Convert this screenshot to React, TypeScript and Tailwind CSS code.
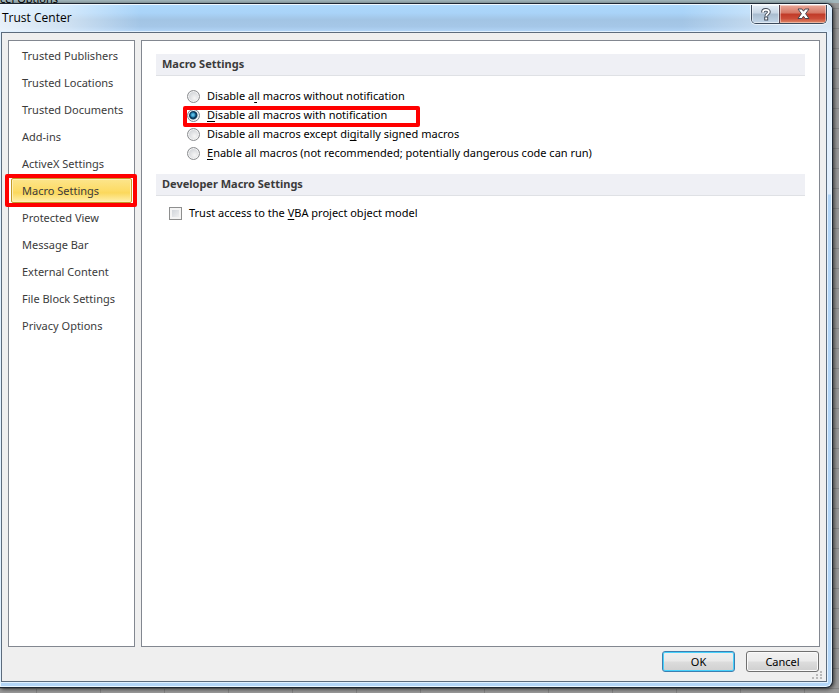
import { useState } from "react";
import type { ReactNode } from "react";

const sections = [
  "Trusted Publishers",
  "Trusted Locations",
  "Trusted Documents",
  "Add-ins",
  "ActiveX Settings",
  "Macro Settings",
  "Protected View",
  "Message Bar",
  "External Content",
  "File Block Settings",
  "Privacy Options",
];

const macroOptions: { id: string; label: ReactNode }[] = [
  { id: "none", label: <>Disable a<u>l</u>l macros without notification</> },
  { id: "notify", label: <><u>D</u>isable all macros with notification</> },
  { id: "signed", label: <>Disable all macros except di<u>g</u>itally signed macros</> },
  { id: "all", label: <><u>E</u>nable all macros (not recommended; potentially dangerous code can run)</> },
];

function Highlight({ className }: { className: string }) {
  return <span className={`pointer-events-none absolute z-10 rounded-xs border-4 border-[#ff0000] ${className}`} />;
}

function CaptionButtons() {
  return (
    <div className="mr-[5px] flex h-[19px] overflow-hidden rounded-b-[5px] border border-t-0 border-[#3c4a5c] shadow-[0_0_0_1px_rgba(255,255,255,0.6)]">
      <button
        type="button"
        aria-label="Help"
        className="flex w-[28px] items-center justify-center border-r border-[#59404a] bg-[linear-gradient(#e4edf6_0%,#c8d6e5_45%,#a9bccf_50%,#c3d6e8_100%)] inset-shadow-[0_0_0_1px_rgba(255,255,255,0.5)]"
      >
        <svg width="10" height="13" viewBox="0 0 10 13" fill="none">
          <path d="M2 4.4V4c0-1.3 1.2-2.2 2.9-2.2S7.900 2.700 7.900 4c0 1.900-2.600 1.900-2.600 4" stroke="#434b58" strokeWidth="3.6" />
          <path d="M3.2 8.6h4v4h-4z" fill="#434b58" />
          <path d="M2 4.4V4c0-1.3 1.2-2.2 2.9-2.2S7.900 2.700 7.900 4c0 1.900-2.600 1.900-2.600 4" stroke="#fff" strokeWidth="1.8" />
          <path d="M4.2 9.600h2v2h-2z" fill="#fff" />
        </svg>
      </button>
      <button
        type="button"
        aria-label="Close"
        className="flex w-[46px] items-center justify-center bg-[linear-gradient(#e9a999_0%,#d57664_45%,#c03a28_50%,#cb4c38_75%,#e08a68_100%)] inset-shadow-[0_0_0_1px_rgba(255,255,255,0.4)]"
      >
        <svg width="13" height="12" viewBox="0 0 13 12">
          <path
            d="M1 1h3.9l1.6 2.2L8.1 1H12L8.6 5.700 12 10.500H8.100L6.500 8.200l-1.600 2.300H1l3.400-4.800z"
            fill="#fff"
            stroke="#4b4750"
            strokeLinejoin="round"
          />
        </svg>
      </button>
    </div>
  );
}

function SectionHeading({ children }: { children: ReactNode }) {
  return (
    <h2 className="h-[22px] border-b border-[#dfe1e5] bg-[#eff0f5] px-[6px] text-[11px] leading-5 font-bold text-[#3b3b3b]">
      {children}
    </h2>
  );
}

export default function App() {
  const [section, setSection] = useState("Macro Settings");
  const [macro, setMacro] = useState("notify");
  const [trustVba, setTrustVba] = useState(false);

  return (
    <div className="relative flex min-h-screen flex-col overflow-hidden bg-[#9a9a9a] bg-[repeating-linear-gradient(90deg,transparent_0_36px,#848484_36px_37px,transparent_37px_64px),repeating-linear-gradient(transparent_0_8px,#848484_8px_9px,transparent_9px_20px)] font-['Noto_Sans','Open_Sans',sans-serif] text-[11px] text-black">
      <div className="flex h-[3px] items-end bg-[#a3b8bd]">
        <span className="leading-[9px]">cel Options</span>
      </div>

      <div className="relative mr-[6px] mb-[5px] flex flex-1 flex-col rounded-r-[7px] border border-l-0 border-[#1d2733] bg-[#b7d8f8] bg-[linear-gradient(#e3effc_0_190px,#b3d6f8_191px)] pr-[5px] pb-[5px] shadow-[1px_1px_4px_rgba(0,0,0,0.7)] inset-shadow-[0_0_0_1px_#e9f6ff]">
        <header className="-mr-[5px] flex h-[28px] items-start justify-between rounded-tr-[6px] border-t border-[#eff8ff] bg-[linear-gradient(90deg,rgba(255,255,255,0.75)_0,rgba(255,255,255,0.45)_70px,transparent_140px,transparent_82%,rgba(255,255,255,0.55)_96%),linear-gradient(#acd8fb_0%,#a9d3f8_30%,#a2c4e4_55%,#a5c7e8_80%,#b3d6f8_100%)]">
          <h1 className="pl-[2px] font-['Open_Sans','Noto_Sans',sans-serif] text-[12px] leading-[26px]">Trust Center</h1>
          <CaptionButtons />
        </header>

        <main className="ml-px flex flex-1 flex-col border border-[#5c6b7c] bg-[#efefef] px-[6px] pt-[7px] shadow-[0_0_0_1px_#e1f1ff]">
          <div className="flex flex-1 gap-[6px]">
            <nav className="w-[127px] shrink-0 border border-[#828790] bg-white px-[2px] pt-px">
              {sections.map((name) => (
                <div key={name} className="relative h-[27px] py-px">
                  <button
                    type="button"
                    onClick={() => setSection(name)}
                    className={`block h-[25px] w-full rounded-xs border px-[10px] text-left leading-[23px] whitespace-nowrap text-[#3b3b3b] ${
                      name === section
                        ? "border-[#c29b29] bg-[linear-gradient(#fce58c_0%,#fddc68_48%,#fbd85c_60%,#fff0ae_100%)] inset-shadow-[0_0_0_1px_#ffefb5]"
                        : "border-transparent"
                    }`}
                  >
                    {name}
                  </button>
                  {name === section && <Highlight className="-inset-y-[3px] -right-[5px] -left-[6px]" />}
                </div>
              ))}
            </nav>

            <section className="flex-1 border border-[#828790] bg-white px-[14px] pt-[13px]">
              <SectionHeading>Macro Settings</SectionHeading>
              <div role="radiogroup" aria-label="Macro Settings" className="flex flex-col items-start pt-[11px] pb-[11px] pl-[31px]">
                {macroOptions.map(({ id, label }) => (
                  <label key={id} className="relative flex h-[19px] items-center gap-[7px] whitespace-nowrap">
                    <input
                      type="radio"
                      name="macro"
                      checked={macro === id}
                      onChange={() => setMacro(id)}
                      className="size-[13px] appearance-none rounded-full border border-[#8b8d90] bg-[radial-gradient(circle_at_60%_65%,#f6f6f6_0%,#cfd2d6_75%)] inset-shadow-[0_0_0_1px_#f4f4f4] checked:border-[#7f8a94] checked:bg-[radial-gradient(circle_at_45%_45%,#7fd2f2_0,#2a8fc0_2px,#0d3c5e_3px,#0d3c5e_4px,#dbe3e9_5px)]"
                    />
                    <span className="[&_u]:underline-offset-2">{label}</span>
                    {id === "notify" && <Highlight className="top-0 -right-[33px] -bottom-[2px] -left-1" />}
                  </label>
                ))}
              </div>

              <SectionHeading>Developer Macro Settings</SectionHeading>
              <label className="flex items-center gap-[7px] pt-2 pl-[13px] leading-[18px]">
                <input
                  type="checkbox"
                  checked={trustVba}
                  onChange={(e) => setTrustVba(e.target.checked)}
                  className="size-[13px] appearance-none border border-[#8e8f8f] bg-[linear-gradient(135deg,#c9ced5,#f6f6f6)] inset-shadow-[0_0_0_2px_#f4f4f4] checked:bg-[#2a6f9e]"
                />
                <span className="[&_u]:underline-offset-2">
                  Trust access to the <u>V</u>BA project object model
                </span>
              </label>
            </section>
          </div>

          <footer className="relative flex h-[34px] items-start justify-end gap-[11px] pt-1 pr-px">
            <button
              type="button"
              className="h-[21px] w-[73px] rounded-[3px] border border-[#3c7fb1] bg-[linear-gradient(#f0f0f0_0%,#e9e9e9_48%,#dcdcdc_52%,#d0d0d0_100%)] leading-[19px] inset-shadow-[0_0_0_1px_#48d1fb]"
            >
              OK
            </button>
            <button
              type="button"
              className="h-[21px] w-[73px] rounded-[3px] border border-[#707070] bg-[linear-gradient(#f2f2f2_0%,#ebebeb_48%,#dddddd_52%,#cfcfcf_100%)] leading-[19px] inset-shadow-[0_0_0_1px_#fafafa]"
            >
              Cancel
            </button>
            <svg className="absolute -right-1 bottom-0" width="12" height="11" viewBox="0 0 12 11" fill="#b9b9b9">
              <path d="M8 1h2v2H8zM4 4h2v2H4zM8 4h2v2H8zM0 7h2v2H0zM4 7h2v2H4zM8 7h2v2H8z" />
            </svg>
          </footer>
        </main>
      </div>
    </div>
  );
}
